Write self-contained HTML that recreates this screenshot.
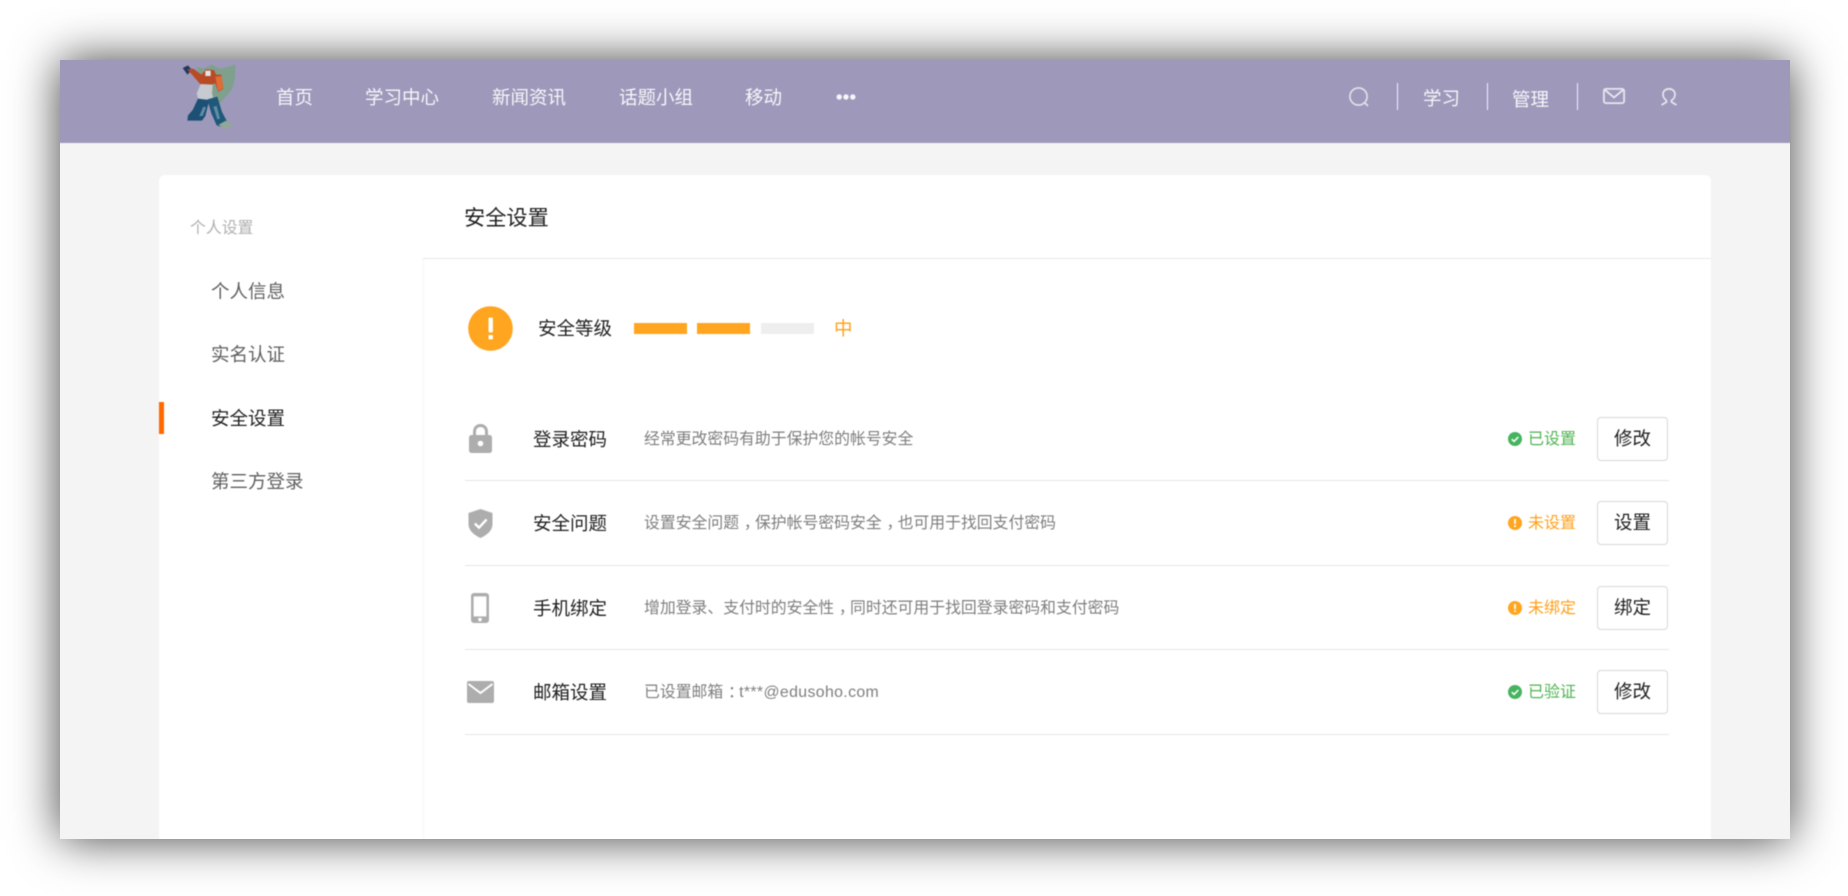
<!DOCTYPE html>
<html lang="zh-CN">
<head>
<meta charset="utf-8">
<title>安全设置</title>
<style>
html,body{margin:0;padding:0;background:#fff;width:1848px;height:896px;overflow:hidden}
body{font-family:"Liberation Sans","Noto Sans CJK SC",sans-serif;position:relative}
.shadow{position:absolute;left:60px;top:60px;width:1730px;height:779px;box-shadow:0 0 44px rgba(0,0,0,.75)}
.win{position:absolute;left:60px;top:60px;width:1730px;height:779px;background:#f4f4f4;overflow:hidden}
.in{position:absolute;left:-60px;top:-60px;width:1848px;height:896px;filter:blur(.45px)}
.a{position:absolute;white-space:nowrap}
.t{position:absolute;white-space:nowrap;line-height:30px;height:30px}
.hd{position:absolute;left:0;top:0;width:1848px;height:143px;background:#9e99bb}
.nav{font-size:18.5px;color:#f7f6fa;top:83px}
.vs{position:absolute;top:83px;width:1px;height:27px;background:#f2f0f6}
.card{position:absolute;left:159px;top:175px;width:1552px;height:720px;background:#fff;border-radius:6px 6px 0 0}
.side{position:absolute;left:423px;top:258px;width:1px;height:640px;background:#f7f7f7}
.hline{position:absolute;left:423px;top:258px;width:1288px;height:1px;background:#e8e8e8}
.m{font-size:18.5px;color:#5f5f5f;left:211px}
.bar{position:absolute;top:323px;width:53px;height:10.5px;background:#ffa51f}
.sep{position:absolute;left:465px;width:1204px;height:1px;background:#e6e6e6}
.ttl{font-size:18.5px;color:#1f1f1f;left:533px}
.desc{font-size:15.85px;color:#7e7e7e;left:644px}
.st{font-size:16px;left:1528px}
.g{color:#4fb352}.o{color:#ffa01a}
.btn{position:absolute;left:1597px;width:69px;height:42px;border:1.5px solid #d8d8d8;border-radius:4px;background:#fff;color:#1f1f1f;font-size:18.5px;line-height:42px;text-align:center}
svg{position:absolute;overflow:visible}
.p{position:relative;left:.3em;font-style:normal}
.l{letter-spacing:.37px}
</style>
</head>
<body>
<div class="shadow"></div>
<div class="win"><div class="in">
  <div class="hd"></div>

  <svg style="left:170px;top:50px" width="90" height="90" viewBox="0 0 270 270">
    <path d="M78 50 L100 56 L125 44 L150 56 L196 44 C198 80 194 110 178 128 L150 160 L122 140 L96 92Z" fill="#80a08e"/>
    <path d="M38 54 L54 46 L66 60 L52 74Z" fill="#24395e"/>
    <path d="M52 58 L70 56 L94 74 L108 58 L132 60 L138 74 L154 74 L160 116 L144 126 L136 100 L124 104 L94 106Z" fill="#b94a26"/>
    <path d="M136 80 L155 78 L160 114 L144 124Z" fill="#e06c36"/>
    <rect x="106" y="62" width="16" height="16" fill="#e3e4e8"/>
    <path d="M92 102 L128 104 L126 130 L132 152 L86 152 L80 130Z" fill="#c6cad1"/>
    <path d="M84 146 L118 150 L106 198 L96 212 L52 212 L54 196 L68 180Z" fill="#1c5075"/>
    <path d="M112 148 L142 140 L156 186 L172 216 L158 232 L140 226 L124 190Z" fill="#205879"/>
    <path d="M100 170 L108 172 L98 198 L88 198Z" fill="#5f8fa6"/>
    <path d="M130 170 L140 168 L150 206 L142 208Z" fill="#5f8fa6"/>
    <path d="M146 224 L168 212 L192 226 L160 238Z" fill="#8fa898"/>
  </svg>

  <div class="t nav" style="left:276px">首页</div>
  <div class="t nav" style="left:365px">学习中心</div>
  <div class="t nav" style="left:492px">新闻资讯</div>
  <div class="t nav" style="left:619px">话题小组</div>
  <div class="t nav" style="left:745px">移动</div>
  <svg style="left:836px;top:93px" width="20" height="8" viewBox="0 0 20 8" fill="#f7f6fa"><circle cx="3.2" cy="4" r="2.7"/><circle cx="10" cy="4" r="2.7"/><circle cx="16.8" cy="4" r="2.7"/></svg>

  <svg style="left:1349px;top:87px" width="21" height="20" viewBox="0 0 21 20" fill="none" stroke="#e4e2ed" stroke-width="1.6"><circle cx="9.5" cy="9.5" r="8.6"/><path d="M15.5 15.5 L19 19"/></svg>
  <div class="vs" style="left:1397px"></div>
  <div class="t nav" style="left:1423px;top:84px">学习</div>
  <div class="vs" style="left:1487px"></div>
  <div class="t nav" style="left:1512px;top:85px">管理</div>
  <div class="vs" style="left:1577px"></div>
  <svg style="left:1603px;top:88px" width="22" height="16" viewBox="0 0 22 16" fill="none" stroke="#e8e6f0" stroke-width="1.8"><rect x=".9" y=".9" width="20.2" height="14.2" rx="2"/><path d="M2 2 L11 9.5 L20 2"/></svg>
  <svg style="left:1661px;top:88px" width="16" height="18" viewBox="0 0 16 18" fill="none" stroke="#e8e6f0" stroke-width="1.7"><path d="M5.5 12.5 C2.5 10.5 2 7.5 2 6.5 C2 3 4.6 .9 8 .9 C11.4 .9 14 3 14 6.5 C14 7.5 13.5 10.5 10.5 12.5 L10.5 14 L15.5 17"/><path d="M5.5 12.5 L5.5 14 L.5 17"/></svg>

  <div class="card"></div>
  <div class="side"></div>
  <div class="hline"></div>

  <div class="t" style="left:190px;top:214px;font-size:15.85px;color:#b0b0b0">个人设置</div>
  <div class="t m" style="top:277px">个人信息</div>
  <div class="t m" style="top:340px">实名认证</div>
  <div class="t m" style="top:404px;color:#1f1f1f">安全设置</div>
  <div class="t m" style="top:467px">第三方登录</div>
  <div class="a" style="left:159px;top:402px;width:5px;height:32px;background:#ff6a00"></div>

  <div class="t" style="left:464px;top:204px;font-size:21.2px;color:#1f1f1f">安全设置</div>

  <svg style="left:468px;top:306px" width="45" height="45" viewBox="0 0 45 45"><circle cx="22.5" cy="22.5" r="22.3" fill="#ffa51f"/><rect x="20.5" y="11.5" width="4.4" height="15" rx="1.2" fill="#fff"/><rect x="20.5" y="29" width="4.4" height="4.4" rx=".8" fill="#fff"/></svg>
  <div class="t" style="left:538px;top:314px;font-size:18.5px;color:#1f1f1f">安全等级</div>
  <div class="bar" style="left:634px"></div>
  <div class="bar" style="left:697px"></div>
  <div class="bar" style="left:761px;background:#eeeeee"></div>
  <div class="t" style="left:834px;top:314px;font-size:18.5px;color:#ffa01a">中</div>

  <svg style="left:469px;top:424px" width="23" height="29" viewBox="0 0 23 29"><path d="M5.5 13 V8 C5.5 3.8 8 1.5 11.5 1.5 C15 1.5 17.5 3.8 17.5 8 V13" fill="none" stroke="#adadad" stroke-width="3"/><rect x="0" y="11" width="23" height="18" rx="2.5" fill="#adadad"/><circle cx="11.5" cy="19.5" r="2.8" fill="#fff"/></svg>
  <div class="t ttl" style="top:425px">登录密码</div>
  <div class="t desc" style="top:425px">经常更改密码有助于保护您的帐号安全</div>
  <svg style="left:1508px;top:432px" width="14" height="14" viewBox="0 0 14 14"><circle cx="7" cy="7" r="7" fill="#46b45f"/><path d="M3.8 7.2 L6.1 9.4 L10.3 5" fill="none" stroke="#fff" stroke-width="1.6"/></svg>
  <div class="t st g" style="top:425px">已设置</div>
  <div class="btn" style="top:417px">修改</div>
  <div class="sep" style="top:480px"></div>

  <svg style="left:468px;top:509px" width="25" height="29" viewBox="0 0 25 29"><path d="M12.5 0 L24.5 4 V15 C24.5 22 18 26.5 12.5 29 C7 26.5 .5 22 .5 15 V4Z" fill="#adadad"/><path d="M6.8 14.5 L11 18.6 L18.6 10.4" fill="none" stroke="#fff" stroke-width="2.4"/></svg>
  <div class="t ttl" style="top:509px">安全问题</div>
  <div class="t desc" style="top:509px">设置安全问题<i class="p">，</i>保护帐号密码安全<i class="p">，</i>也可用于找回支付密码</div>
  <svg style="left:1508px;top:516px" width="14" height="14" viewBox="0 0 14 14"><circle cx="7" cy="7" r="7" fill="#ffa51f"/><rect x="6.1" y="3" width="1.8" height="5" fill="#fff"/><rect x="6.1" y="9.2" width="1.8" height="1.8" fill="#fff"/></svg>
  <div class="t st o" style="top:509px">未设置</div>
  <div class="btn" style="top:501px">设置</div>
  <div class="sep" style="top:565px"></div>

  <svg style="left:471px;top:593px" width="18" height="30" viewBox="0 0 18 30"><rect x="0" y="0" width="18" height="30" rx="3" fill="#adadad"/><rect x="2.6" y="3.4" width="12.8" height="20" fill="#fff"/><circle cx="9" cy="26.6" r="1.8" fill="#fff"/></svg>
  <div class="t ttl" style="top:594px">手机绑定</div>
  <div class="t desc" style="top:594px">增加登录、支付时的安全性<i class="p">，</i>同时还可用于找回登录密码和支付密码</div>
  <svg style="left:1508px;top:601px" width="14" height="14" viewBox="0 0 14 14"><circle cx="7" cy="7" r="7" fill="#ffa51f"/><rect x="6.1" y="3" width="1.8" height="5" fill="#fff"/><rect x="6.1" y="9.2" width="1.8" height="1.8" fill="#fff"/></svg>
  <div class="t st o" style="top:594px">未绑定</div>
  <div class="btn" style="top:586px">绑定</div>
  <div class="sep" style="top:649px"></div>

  <svg style="left:467px;top:681px" width="27" height="22" viewBox="0 0 27 22"><rect x="0" y="0" width="27" height="22" rx="2" fill="#adadad"/><path d="M1.5 3 L13.5 12 L25.5 3" fill="none" stroke="#fff" stroke-width="2"/></svg>
  <div class="t ttl" style="top:678px">邮箱设置</div>
  <div class="t desc" style="top:678px">已设置邮箱<i class="p">：</i><span class="l">t***@edusoho.com</span></div>
  <svg style="left:1508px;top:685px" width="14" height="14" viewBox="0 0 14 14"><circle cx="7" cy="7" r="7" fill="#46b45f"/><path d="M3.8 7.2 L6.1 9.4 L10.3 5" fill="none" stroke="#fff" stroke-width="1.6"/></svg>
  <div class="t st g" style="top:678px">已验证</div>
  <div class="btn" style="top:670px">修改</div>
  <div class="sep" style="top:734px"></div>
</div></div>
</body>
</html>
